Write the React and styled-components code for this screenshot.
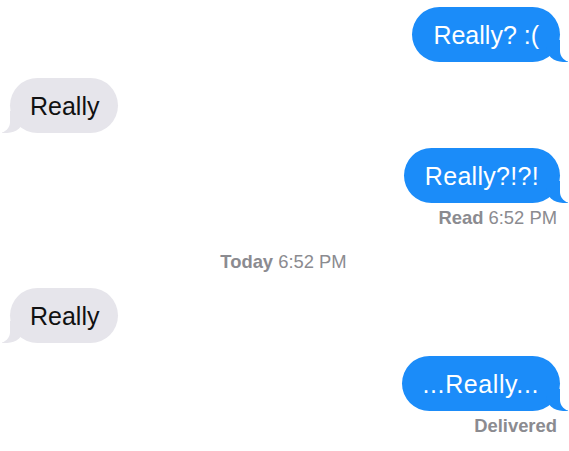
import React from "react";
import styled, { createGlobalStyle, css } from "styled-components";

const Global = createGlobalStyle`
  html, body { margin: 0; padding: 0; background: #ffffff; }
  body { font-family: "Liberation Sans", Arial, sans-serif; -webkit-font-smoothing: antialiased; }
`;

const BLUE = "#1b8cf9";
const GREY = "#e6e5eb";

const Thread = styled.div`
  width: 569px;
  height: 451px;
  box-sizing: border-box;
  padding: 7px 9px 0 10px;
  display: flex;
  flex-direction: column;
  overflow: hidden;
`;

const Row = styled.div`
  display: flex;
  flex-direction: column;
  align-items: ${(p) => (p.$out ? "flex-end" : "flex-start")};
  margin-top: ${(p) => p.$top || 0}px;
`;

const Bubble = styled.div`
  position: relative;
  box-sizing: border-box;
  height: 55px;
  display: flex;
  align-items: center;
  padding: ${(p) => (p.$out ? "0 21px 0 21px" : "0 19px 0 20px")};
  border-radius: 28px;
  font-size: 25px;
  line-height: 28px;
  letter-spacing: ${(p) => p.$spacing || 0}px;
  color: ${(p) => (p.$out ? "#ffffff" : "#111111")};
  background: ${(p) => (p.$out ? BLUE : GREY)};

  &::before,
  &::after {
    content: "";
    position: absolute;
    bottom: 0;
    height: 22px;
  }

  ${(p) =>
    p.$out
      ? css`
          &::before {
            right: -8px;
            width: 22px;
            background: ${BLUE};
            border-bottom-left-radius: 17px 15px;
          }
          &::after {
            right: -26px;
            width: 26px;
            background: #ffffff;
            border-bottom-left-radius: 11px;
          }
        `
      : css`
          &::before {
            left: -8px;
            width: 22px;
            background: ${GREY};
            border-bottom-right-radius: 17px 15px;
          }
          &::after {
            left: -26px;
            width: 26px;
            background: #ffffff;
            border-bottom-right-radius: 11px;
          }
        `}
`;

const Text = styled.span`
  position: relative;
  z-index: 1;
`;

const Caption = styled.div`
  font-size: 18.4px;
  line-height: 20px;
  color: #8b8b90;
  margin-top: ${(p) => p.$top || 0}px;
  align-self: ${(p) => (p.$center ? "center" : "flex-end")};
  margin-right: ${(p) => (p.$center ? "3px" : "3px")};

  b {
    font-weight: 700;
  }
`;

export default function App() {
  return (
    <>
      <Global />
      <Thread>
        <Row $out>
          <Bubble $out>
            <Text>Really? :(</Text>
          </Bubble>
        </Row>
        <Row $top={16}>
          <Bubble>
            <Text>Really</Text>
          </Bubble>
        </Row>
        <Row $out $top={15}>
          <Bubble $out $spacing={0.3}>
            <Text>Really?!?!</Text>
          </Bubble>
          <Caption $top={5}>
            <b>Read</b> 6:52 PM
          </Caption>
        </Row>
        <Caption $center $top={24}>
          <b>Today</b> 6:52 PM
        </Caption>
        <Row $top={16}>
          <Bubble>
            <Text>Really</Text>
          </Bubble>
        </Row>
        <Row $out $top={13}>
          <Bubble $out $spacing={0.6}>
            <Text>...Really...</Text>
          </Bubble>
          <Caption $top={5}>
            <b>Delivered</b>
          </Caption>
        </Row>
      </Thread>
    </>
  );
}
